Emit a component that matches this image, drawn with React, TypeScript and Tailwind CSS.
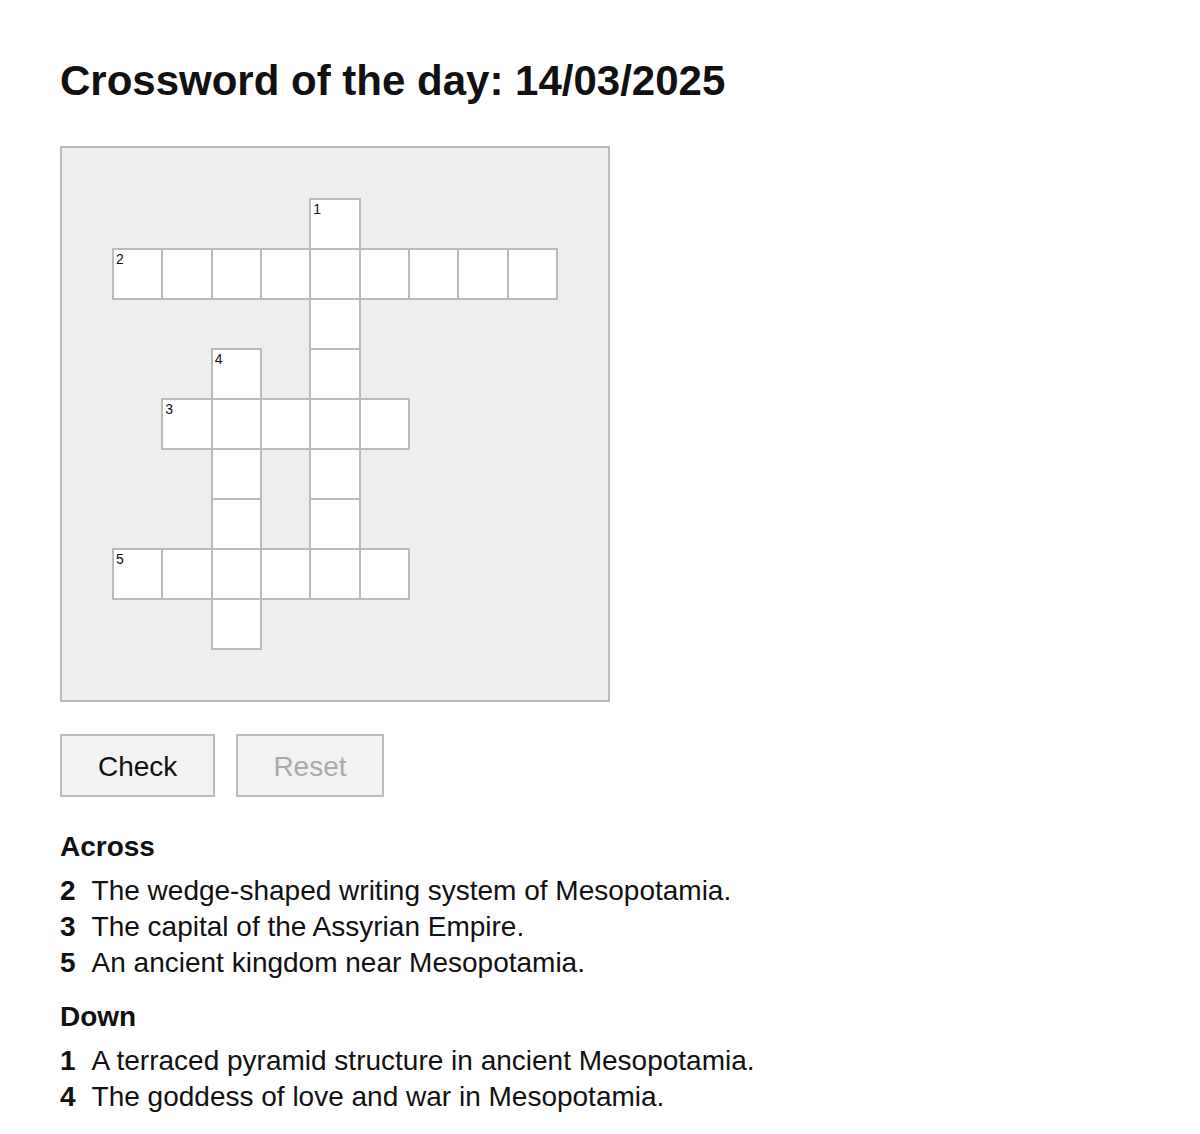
import React from 'react';

type Cell = { r: number; c: number; n?: number };

// answers: 1 ZIGGURAT, 2 CUNEIFORM, 3 ASHUR, 4 ISHTAR, 5 URARTU
const words = [
  { n: 1, r: 0, c: 4, len: 8, down: true },
  { n: 2, r: 1, c: 0, len: 9, down: false },
  { n: 3, r: 4, c: 1, len: 5, down: false },
  { n: 4, r: 3, c: 2, len: 6, down: true },
  { n: 5, r: 7, c: 0, len: 6, down: false },
];

const buildCells = (): Cell[] => {
  const map = new Map<string, Cell>();
  words.forEach((w) => {
    for (let i = 0; i < w.len; i++) {
      const r = w.down ? w.r + i : w.r;
      const c = w.down ? w.c : w.c + i;
      const key = `${r}-${c}`;
      const cell = map.get(key) || { r, c };
      if (i === 0) cell.n = w.n;
      map.set(key, cell);
    }
  });
  return Array.from(map.values());
};

const across = [
  { n: 2, text: 'The wedge-shaped writing system of Mesopotamia.' },
  { n: 3, text: 'The capital of the Assyrian Empire.' },
  { n: 5, text: 'An ancient kingdom near Mesopotamia.' },
];

const down = [
  { n: 1, text: 'A terraced pyramid structure in ancient Mesopotamia.' },
  { n: 4, text: 'The goddess of love and war in Mesopotamia.' },
];

const ClueList: React.FC<{ title: string; clues: { n: number; text: string }[] }> = ({ title, clues }) => (
  <div>
    <h2 className="font-bold text-[28px] leading-[36px]">{title}</h2>
    <ul className="mt-[8px]">
      {clues.map((c) => (
        <li key={c.n} className="text-[28px] leading-[36px]">
          <span className="font-bold mr-[16px]">{c.n}</span>
          {c.text}
        </li>
      ))}
    </ul>
  </div>
);

export default function App() {
  const cells = buildCells();
  return (
    <div className="min-h-screen bg-white text-[#111] px-[60px] pt-[57px] pb-[20px]" style={{ fontFamily: '"Liberation Sans", Arial, Helvetica, sans-serif' }}>
      <h1 className="font-bold text-[42px] leading-[48px]">Crossword of the day: 14/03/2025</h1>

      <div className="mt-[41px] w-[550px] border-2 border-[#bbb] bg-[#eee] pl-[50px] pt-[50px] pb-[52px]">
        <div className="grid w-[444px] grid-cols-9 grid-rows-[repeat(9,50px)]">
          {cells.map((cell) => (
            <div
              key={`${cell.r}-${cell.c}`}
              className="relative w-[calc(100%+2px)] h-[52px] border-2 border-[#bbb] bg-white"
              style={{ gridRow: cell.r + 1, gridColumn: cell.c + 1 }}
            >
              {cell.n && (
                <span className="absolute top-[1px] left-[2px] text-[14px] leading-[16px]">{cell.n}</span>
              )}
            </div>
          ))}
        </div>
      </div>

      <div className="mt-[32px] flex gap-[21px]">
        <button className="h-[63px] px-[36px] pt-[2px] border-2 border-[#bbb] bg-[#f2f2f2] text-[28px] text-[#111]">Check</button>
        <button disabled className="h-[63px] px-[35px] pt-[2px] border-2 border-[#bbb] bg-[#f2f2f2] text-[28px] text-[#aaa]">Reset</button>
      </div>

      <div className="mt-[32px]">
        <ClueList title="Across" clues={across} />
      </div>
      <div className="mt-[18px]">
        <ClueList title="Down" clues={down} />
      </div>
    </div>
  );
}
